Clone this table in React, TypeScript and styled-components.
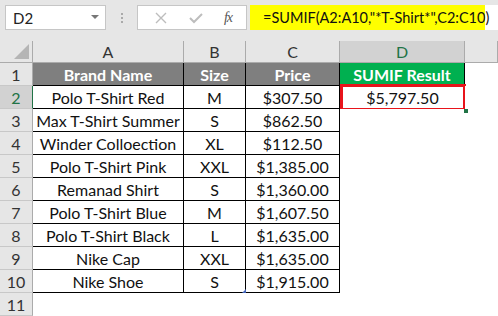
import styled, { createGlobalStyle } from "styled-components";

const GlobalStyle = createGlobalStyle`
    html, body {
        margin: 0;
        padding: 0;
        background: #ffffff;
        overflow: hidden;
    }
    body {
        font-family: Lato, "Liberation Sans", sans-serif;
    }
`;

const Page = styled.div`
    width: 498px;
    height: 316px;
    background: #ffffff;
    overflow: hidden;
`;

const Toolbar = styled.div`
    height: 41px;
    box-sizing: border-box;
    padding: 5px 0 0 5px;
    background: #e6e6e6;
    display: flex;
    align-items: flex-start;
`;

const NameBox = styled.div`
    width: 101px;
    height: 25px;
    box-sizing: border-box;
    background: #ffffff;
    border: 1px solid #c6c6c6;
    display: flex;
    align-items: center;
    justify-content: space-between;
    padding: 0 6px 0 7px;
    font-size: 15px;
    color: #222222;
`;

const DropArrow = styled.span`
    width: 0;
    height: 0;
    border-left: 4px solid transparent;
    border-right: 4px solid transparent;
    border-top: 4px solid #777777;
    margin-top: -2px;
`;

const Grip = styled.div`
    width: 31px;
    height: 25px;
    display: flex;
    flex-direction: column;
    align-items: center;
    justify-content: center;
    gap: 2px;

    span {
        width: 2px;
        height: 2px;
        background: #aaaaaa;
    }
`;

const FxBox = styled.div`
    width: 110px;
    height: 25px;
    box-sizing: border-box;
    background: #ffffff;
    border: 1px solid #c6c6c6;
    display: flex;
    align-items: center;
    justify-content: space-around;
    padding: 0 4px 0 6px;
`;

const FxLabel = styled.span`
    font-family: "Liberation Serif", serif;
    font-style: italic;
    font-size: 14px;
    color: #555555;
    letter-spacing: -1px;
`;

const FormulaBar = styled.div`
    flex: 1;
    margin-left: 3px;
    height: 25px;
    background: #ffffff;
    display: flex;
`;

const FormulaText = styled.div`
    width: 235px;
    height: 25px;
    background: #ffff00;
    box-sizing: border-box;
    padding-left: 13px;
    display: flex;
    align-items: center;
    font-family: Lato, "Liberation Sans", sans-serif;
    font-size: 14.5px;
    color: #111111;
    white-space: nowrap;
`;

const Sheet = styled.div`
    display: grid;
    grid-template-columns: 33px 151px 62px 94px 125px 1fr;
    grid-template-rows: 22px;
    grid-auto-rows: 23px;
`;

const Corner = styled.div`
    position: relative;
    background: #e6e6e6;
    border-right: 1px solid #ababab;
    border-bottom: 1px solid #ababab;
    box-sizing: border-box;

    &::after {
        content: "";
        position: absolute;
        right: 3px;
        bottom: 3px;
        width: 0;
        height: 0;
        border-left: 15px solid transparent;
        border-bottom: 15px solid #b5b5b5;
    }
`;

const ColHead = styled.div<{ $active?: boolean }>`
    background: ${(p) => (p.$active ? "#d2d2d2" : "#e6e6e6")};
    border-right: 1px solid #ababab;
    border-bottom: 1px solid #ababab;
    box-sizing: border-box;
    display: flex;
    align-items: center;
    justify-content: center;
    font-size: 16px;
    color: ${(p) => (p.$active ? "#217346" : "#333333")};
`;

const RowHead = styled.div<{ $active?: boolean }>`
    background: ${(p) => (p.$active ? "#d2d2d2" : "#e6e6e6")};
    border-right: 1px solid ${(p) => (p.$active ? "#217346" : "#ababab")};
    border-bottom: 1px solid #c8c8c8;
    box-sizing: border-box;
    display: flex;
    align-items: center;
    justify-content: center;
    font-size: 16px;
    color: ${(p) => (p.$active ? "#217346" : "#333333")};
`;

const Cell = styled.div<{ $bg?: string; $head?: boolean; $boxed?: boolean; $edge?: boolean }>`
    position: relative;
    background: ${(p) => p.$bg || "#ffffff"};
    border-right: ${(p) => (p.$boxed || p.$edge ? "1px solid #000000" : "none")};
    border-bottom: ${(p) => (p.$boxed ? "1px solid #000000" : "none")};
    box-sizing: border-box;
    display: flex;
    align-items: center;
    justify-content: center;
    font-size: 16px;
    font-weight: ${(p) => (p.$head ? 700 : 400)};
    color: ${(p) => (p.$head ? "#ffffff" : "#111111")};
    white-space: nowrap;
`;

const ResultCell = styled(Cell)`
    &::after {
        content: "";
        position: absolute;
        left: 0;
        top: -2px;
        right: -1px;
        bottom: -2px;
        border: 3px solid #e8141b;
    }

    &::before {
        content: "";
        position: absolute;
        right: -3px;
        bottom: -4px;
        width: 4px;
        height: 4px;
        background: #217346;
        z-index: 1;
    }
`;

const HandleCell = styled(Cell)`
    &::after {
        content: "";
        position: absolute;
        right: -1px;
        bottom: -1px;
        width: 0;
        height: 0;
        border-left: 4px solid transparent;
        border-bottom: 4px solid #4466bb;
    }
`;

type Row = { brand: string; size: string; price: string };

const rows: Row[] = [
    { brand: "Polo T-Shirt Red", size: "M", price: "$307.50" },
    { brand: "Max T-Shirt Summer", size: "S", price: "$862.50" },
    { brand: "Winder Colloection", size: "XL", price: "$112.50" },
    { brand: "Polo T-Shirt Pink", size: "XXL", price: "$1,385.00" },
    { brand: "Remanad Shirt", size: "S", price: "$1,360.00" },
    { brand: "Polo T-Shirt Blue", size: "M", price: "$1,607.50" },
    { brand: "Polo T-Shirt Black", size: "L", price: "$1,635.00" },
    { brand: "Nike Cap", size: "XXL", price: "$1,635.00" },
    { brand: "Nike Shoe", size: "S", price: "$1,915.00" },
];

const GRAY = "#7f7f7f";
const GREEN = "#00b050";

export default function App() {
    return (
        <Page>
            <GlobalStyle />
            <Toolbar>
                <NameBox>
                    D2
                    <DropArrow />
                </NameBox>
                <Grip>
                    <span />
                    <span />
                    <span />
                </Grip>
                <FxBox>
                    <svg width="14" height="14" viewBox="0 0 14 14">
                        <path d="M2 2 L12 12 M12 2 L2 12" stroke="#bdbdbd" strokeWidth="1.4" fill="none" />
                    </svg>
                    <svg width="16" height="14" viewBox="0 0 16 14">
                        <path d="M2 7 L6 11 L14 3" stroke="#bdbdbd" strokeWidth="2" fill="none" />
                    </svg>
                    <FxLabel>fx</FxLabel>
                </FxBox>
                <FormulaBar>
                    <FormulaText>=SUMIF(A2:A10,"*T-Shirt*",C2:C10)</FormulaText>
                </FormulaBar>
            </Toolbar>
            <Sheet>
                <Corner />
                <ColHead>A</ColHead>
                <ColHead>B</ColHead>
                <ColHead>C</ColHead>
                <ColHead $active>D</ColHead>
                <ColHead />

                <RowHead>1</RowHead>
                <Cell $bg={GRAY} $head $boxed>Brand Name</Cell>
                <Cell $bg={GRAY} $head $boxed>Size</Cell>
                <Cell $bg={GRAY} $head $boxed>Price</Cell>
                <Cell $bg={GREEN} $head $edge>SUMIF Result</Cell>
                <Cell />

                {rows.map((r, i) => {
                    const n = i + 2;
                    const last = n === 10;
                    return [
                        <RowHead key={"h" + n} $active={n === 2}>{n}</RowHead>,
                        <Cell key={"a" + n} $boxed>{r.brand}</Cell>,
                        last ? (
                            <HandleCell key={"b" + n} $boxed>{r.size}</HandleCell>
                        ) : (
                            <Cell key={"b" + n} $boxed>{r.size}</Cell>
                        ),
                        <Cell key={"c" + n} $boxed>{r.price}</Cell>,
                        n === 2 ? <ResultCell key={"d" + n}>$5,797.50</ResultCell> : <Cell key={"d" + n} />,
                        <Cell key={"e" + n} />,
                    ];
                })}

                <RowHead>11</RowHead>
                <Cell />
                <Cell />
                <Cell />
                <Cell />
                <Cell />
            </Sheet>
        </Page>
    );
}
